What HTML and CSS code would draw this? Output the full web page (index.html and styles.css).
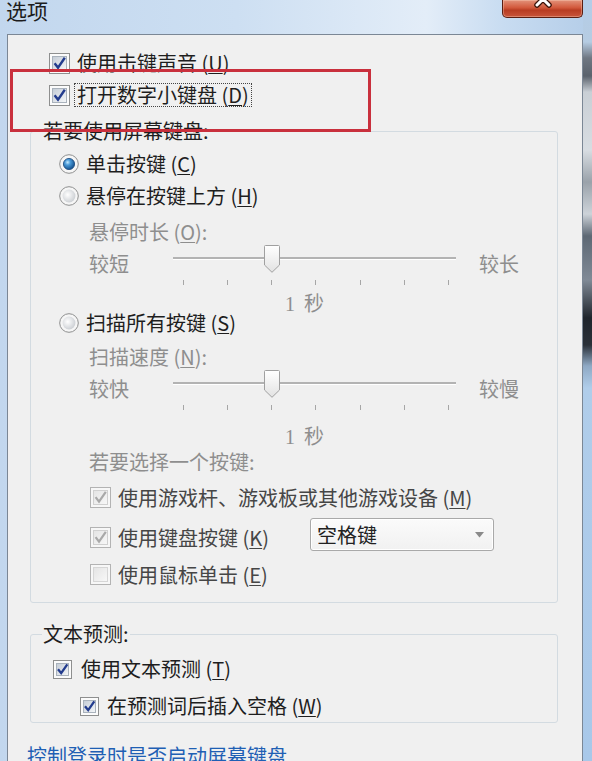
FILE: index.html
```html
<!DOCTYPE html>
<html lang="zh-CN">
<head>
<meta charset="utf-8">
<title>选项</title>
<link rel="stylesheet" href="styles.css">
</head>
<body>
<svg class="defs" width="0" height="0" aria-hidden="true">
  <defs>
    <linearGradient id="cbFill" x1="0" y1="0" x2="1" y2="1">
      <stop offset="0" stop-color="#c4ccd6"/>
      <stop offset="1" stop-color="#f5f7f9"/>
    </linearGradient>
    <linearGradient id="cbFillDis" x1="0" y1="0" x2="1" y2="1">
      <stop offset="0" stop-color="#e4e4e4"/>
      <stop offset="1" stop-color="#f8f8f8"/>
    </linearGradient>
    <radialGradient id="radioIn" cx="0.4" cy="0.4" r="0.7">
      <stop offset="0" stop-color="#ffffff"/>
      <stop offset="1" stop-color="#c6cacf"/>
    </radialGradient>
    <radialGradient id="radioDot" cx="0.38" cy="0.35" r="0.7">
      <stop offset="0" stop-color="#c4e8fc"/>
      <stop offset="0.35" stop-color="#4a9ad8"/>
      <stop offset="1" stop-color="#0f4a86"/>
    </radialGradient>
    <linearGradient id="thumbFill" x1="0" y1="0" x2="0" y2="1">
      <stop offset="0" stop-color="#ffffff"/>
      <stop offset="1" stop-color="#e2e2e2"/>
    </linearGradient>
  </defs>
</svg>

<div class="window">
  <div class="titlebar">
    <div class="title">选项</div>
    <div class="close">
      <svg width="20" height="20" viewBox="0 0 20 20"><path d="M4 4 L16 16 M16 4 L4 16" stroke="#3b1309" stroke-width="5.5" stroke-linecap="round"/><path d="M4 4 L16 16 M16 4 L4 16" stroke="#ffffff" stroke-width="3" stroke-linecap="round"/></svg>
    </div>
  </div>

  <div class="frame-body">
    <div class="client">
      <div class="opt-row">
        <svg class="cb" width="21" height="21" viewBox="0 0 21 21"><rect x=".5" y=".5" width="20" height="20" fill="#fbfbfb" stroke="#8e8f8f"/><rect x="3.5" y="3.5" width="14" height="14" fill="url(#cbFill)" stroke="#a9b2bc"/><path d="M5.6 10.2 L9 14.6 L15.8 4.8" fill="none" stroke="#233c8e" stroke-width="2.4"/></svg>
        <span class="opt-label">使用击键声音 (<u>U</u>)</span>
      </div>
      <div class="opt-row">
        <svg class="cb" width="21" height="21" viewBox="0 0 21 21"><rect x=".5" y=".5" width="20" height="20" fill="#fbfbfb" stroke="#8e8f8f"/><rect x="3.5" y="3.5" width="14" height="14" fill="url(#cbFill)" stroke="#a9b2bc"/><path d="M5.6 10.2 L9 14.6 L15.8 4.8" fill="none" stroke="#233c8e" stroke-width="2.4"/></svg>
        <span class="opt-label focus">打开数字小键盘 (<u>D</u>)</span>
      </div>

      <fieldset class="group group-osk">
        <legend class="group-title">若要使用屏幕键盘:</legend>

        <div class="radio-row r-first">
          <svg width="20" height="20" viewBox="0 0 20 20"><circle cx="10" cy="10" r="9.3" fill="#f6f6f6" stroke="#8e8f8f"/><circle cx="10" cy="10" r="5.6" fill="url(#radioDot)" stroke="#18487c" stroke-width=".8"/></svg>
          <span>单击按键 (<u>C</u>)</span>
        </div>
        <div class="radio-row r-second">
          <svg width="20" height="20" viewBox="0 0 20 20"><circle cx="10" cy="10" r="9.3" fill="#f6f6f6" stroke="#8e8f8f"/><circle cx="10" cy="10" r="6.4" fill="url(#radioIn)"/></svg>
          <span>悬停在按键上方 (<u>H</u>)</span>
        </div>

        <div class="sub-label sl-hover">悬停时长 (<u>O</u>):</div>
        <div class="slider-row sr-hover">
          <span class="slider-end">较短</span>
          <div class="slider">
            <div class="track-area">
              <div class="track"></div>
              <svg class="thumb" width="16" height="28" viewBox="0 0 16 28"><path d="M1.5 .5 H14.5 Q15.5 .5 15.5 1.5 V20 L8 27.3 L.5 20 V1.5 Q.5 .5 1.5 .5 Z" fill="url(#thumbFill)" stroke="#a0a0a0"/></svg>
            </div>
            <div class="ticks"><i></i><i></i><i></i><i></i><i></i><i></i><i></i></div>
          </div>
          <span class="slider-end">较长</span>
        </div>
        <div class="slider-value sv-hover"><span class="num">1</span>秒</div>

        <div class="radio-row r-third">
          <svg width="20" height="20" viewBox="0 0 20 20"><circle cx="10" cy="10" r="9.3" fill="#f6f6f6" stroke="#8e8f8f"/><circle cx="10" cy="10" r="6.4" fill="url(#radioIn)"/></svg>
          <span>扫描所有按键 (<u>S</u>)</span>
        </div>

        <div class="sub-label sl-scan">扫描速度 (<u>N</u>):</div>
        <div class="slider-row sr-scan">
          <span class="slider-end">较快</span>
          <div class="slider">
            <div class="track-area">
              <div class="track"></div>
              <svg class="thumb" width="16" height="28" viewBox="0 0 16 28"><path d="M1.5 .5 H14.5 Q15.5 .5 15.5 1.5 V20 L8 27.3 L.5 20 V1.5 Q.5 .5 1.5 .5 Z" fill="url(#thumbFill)" stroke="#a0a0a0"/></svg>
            </div>
            <div class="ticks"><i></i><i></i><i></i><i></i><i></i><i></i><i></i></div>
          </div>
          <span class="slider-end">较慢</span>
        </div>
        <div class="slider-value sv-scan"><span class="num">1</span>秒</div>

        <div class="sub-label sl-select">若要选择一个按键:</div>

        <div class="cb-row cbr-joy">
          <svg class="cb" width="21" height="21" viewBox="0 0 21 21"><rect x=".5" y=".5" width="20" height="20" fill="#f7f7f7" stroke="#b3b3b3"/><rect x="3.5" y="3.5" width="14" height="14" fill="url(#cbFillDis)" stroke="#d0d0d0"/><path d="M5.6 10.2 L9 14.6 L15.8 4.8" fill="none" stroke="#a9a9a9" stroke-width="2.2"/></svg>
          <span>使用游戏杆、游戏板或其他游戏设备 (<u>M</u>)</span>
        </div>
        <div class="cb-row cbr-key">
          <div class="keysel">
            <svg class="cb" width="21" height="21" viewBox="0 0 21 21"><rect x=".5" y=".5" width="20" height="20" fill="#f7f7f7" stroke="#b3b3b3"/><rect x="3.5" y="3.5" width="14" height="14" fill="url(#cbFillDis)" stroke="#d0d0d0"/><path d="M5.6 10.2 L9 14.6 L15.8 4.8" fill="none" stroke="#a9a9a9" stroke-width="2.2"/></svg>
            <span>使用键盘按键 (<u>K</u>)</span>
          </div>
          <div class="dropdown">
            <span class="dropdown-value">空格键</span>
            <svg class="dropdown-arrow" width="9" height="6" viewBox="0 0 9 6"><path d="M0 0 H9 L4.5 5.5 Z" fill="#8a8a8a"/></svg>
          </div>
        </div>
        <div class="cb-row cbr-mouse">
          <svg class="cb" width="21" height="21" viewBox="0 0 21 21"><rect x=".5" y=".5" width="20" height="20" fill="#f7f7f7" stroke="#b3b3b3"/><rect x="3.5" y="3.5" width="14" height="14" fill="url(#cbFillDis)" stroke="#d6d6d6"/></svg>
          <span>使用鼠标单击 (<u>E</u>)</span>
        </div>
      </fieldset>

      <fieldset class="group group-tp">
        <legend class="group-title">文本预测:</legend>
        <div class="tp-row tp-row-1">
          <svg class="cb" width="19" height="19" viewBox="0 0 19 19"><rect x=".5" y=".5" width="18" height="18" fill="#fbfbfb" stroke="#8e8f8f"/><rect x="3.5" y="3.5" width="12" height="12" fill="url(#cbFill)" stroke="#a9b2bc"/><path d="M5 9.2 L8.2 13.2 L14.3 4.4" fill="none" stroke="#233c8e" stroke-width="2.3"/></svg>
          <span>使用文本预测 (<u>T</u>)</span>
        </div>
        <div class="tp-row tp-row-2">
          <svg class="cb" width="19" height="19" viewBox="0 0 19 19"><rect x=".5" y=".5" width="18" height="18" fill="#fbfbfb" stroke="#8e8f8f"/><rect x="3.5" y="3.5" width="12" height="12" fill="url(#cbFill)" stroke="#a9b2bc"/><path d="M5 9.2 L8.2 13.2 L14.3 4.4" fill="none" stroke="#233c8e" stroke-width="2.3"/></svg>
          <span>在预测词后插入空格 (<u>W</u>)</span>
        </div>
      </fieldset>

      <a class="osk-link" href="#">控制登录时是否启动屏幕键盘</a>

      <div class="callout"></div>
    </div>
  </div>
</div>
</body>
</html>
```

FILE: styles.css
```css
* {
  box-sizing: border-box;
}

html,
body {
  margin: 0;
  padding: 0;
}

body {
  width: 592px;
  height: 761px;
  overflow: hidden;
  font-family: "Noto Sans CJK SC", "Noto Sans", sans-serif;
  font-size: 20px;
  line-height: 20px;
  color: #1e1e1e;
}

u {
  text-decoration-thickness: 1px;
  text-underline-offset: 2px;
}

.defs {
  display: block;
  width: 0;
  height: 0;
  overflow: hidden;
}

.window {
  width: 592px;
  height: 761px;
  display: flex;
  flex-direction: column;
  background:
    linear-gradient(to bottom,
      #b4cde8 0px, #b6cce2 42px, #6f7782 58px, #5a626c 76px, #c9cfd5 92px,
      #d8dde2 150px, #9aa2aa 182px, #cdd3d9 214px, #5d6874 236px, #808a96 280px,
      #1f252c 318px, #2b3139 345px, #8fa9c4 366px, #b0cdea 388px, #a8c8e9 761px) right top / 9px 100% no-repeat,
    linear-gradient(to right, #c2d7ee 0%, #cddff2 40%, #e3edf8 72%, #c8dcf1 85%, #b4cde8 100%);
}

.titlebar {
  flex: none;
  height: 34px;
  display: flex;
  align-items: flex-start;
}

.title {
  margin: 0 0 0 6px;
  font-size: 21px;
  line-height: 21px;
  color: #1c1c1c;
}

.close {
  margin-left: auto;
  margin-right: 9px;
  width: 81px;
  height: 18px;
  border: 1px solid #5a1e12;
  border-top: none;
  border-radius: 0 0 5px 5px;
  background: linear-gradient(to bottom, #e3927a 0%, #d2593c 45%, #b83c22 60%, #c8553a 100%);
  box-shadow: inset 0 0 0 1px rgba(255, 220, 200, 0.35);
  display: flex;
  justify-content: center;
  overflow: hidden;
}

.close svg {
  margin-top: -11px;
}

.frame-body {
  flex: 1;
  min-height: 0;
  display: flex;
  padding: 0 9px 0 7px;
}

.client {
  flex: 1;
  position: relative;
  overflow: hidden;
  background: #f0f0f0;
  border: 1px solid #7b8795;
  border-bottom: none;
  padding-top: 12px;
}

/* top checkboxes */
.opt-row {
  display: flex;
  align-items: center;
  height: 32px;
  margin-left: 41px;
}

.cb {
  flex: none;
  display: block;
}

.opt-label {
  margin-left: 4px;
  padding: 1px 2px;
  border: 1px dotted transparent;
}

.opt-label.focus {
  border-color: #444;
}

/* group boxes */
.group {
  min-width: 0;
  margin: 8px 24px 0 22px;
  padding: 0 0 17px 0;
  border: 1px solid #d3dbe1;
  border-radius: 3px;
}

.group-title {
  margin-left: 11px;
  padding: 0 1px;
  line-height: 24px;
}

.group-tp {
  margin-top: 19px;
  padding-bottom: 6px;
}

.radio-row {
  display: flex;
  align-items: center;
  gap: 7px;
  height: 20px;
  margin-left: 28px;
}

.radio-row svg {
  flex: none;
  display: block;
}

.r-first { margin-top: 11px; }
.r-second { margin-top: 12px; }
.r-third { margin-top: 0; }

.sub-label {
  height: 20px;
  margin-left: 58px;
  color: #8e8e8e;
}

.sl-hover { margin-top: 16px; }
.sl-scan { margin-top: 14px; }
.sl-select { margin-top: 6px; }

.slider-row {
  display: flex;
  align-items: flex-start;
  height: 38px;
  margin: 6px 0 0 58px;
  color: #8e8e8e;
}

.slider-end {
  flex: none;
  width: 40px;
  margin-top: 6px;
}

.slider {
  flex: none;
  width: 283px;
  margin: 0 23px 0 44px;
}

.track-area {
  position: relative;
  height: 32px;
  padding-top: 9px;
}

.track {
  height: 3px;
  border-top: 2px solid #b3b3b3;
  border-bottom: 1px solid #ffffff;
}

.thumb {
  position: absolute;
  left: 91px;
  top: -3px;
  display: block;
}

.ticks {
  display: flex;
  justify-content: space-between;
  height: 6px;
  padding: 0 7px 0 10px;
}

.ticks i {
  display: block;
  width: 1px;
  height: 5px;
  background: #a6a6a6;
}

.slider-value {
  height: 20px;
  margin-left: 254px;
  color: #8e8e8e;
}

.slider-value .num {
  font-family: "Liberation Serif", serif;
  margin-right: 9px;
}

.sv-hover { margin-top: 7px; }
.sv-scan { margin-top: 15px; }

.cb-row {
  display: flex;
  align-items: center;
  gap: 7px;
  height: 21px;
  margin-left: 59px;
  color: #464646;
}

.cbr-joy { margin-top: 15px; }

.cbr-key {
  align-items: flex-start;
  gap: 0;
  height: 33px;
  margin-top: 10px;
}

.cbr-mouse { margin-top: 13px; }

.keysel {
  flex: none;
  display: flex;
  align-items: center;
  gap: 7px;
  width: 220px;
  height: 21px;
  margin-top: 9px;
}

.dropdown {
  flex: none;
  display: flex;
  align-items: center;
  width: 184px;
  height: 33px;
  padding: 0 9px 0 6px;
  border: 1px solid #a9a9a9;
  border-radius: 3px;
  background: linear-gradient(to bottom, #fbfbfb, #f1f1f1);
  box-shadow: inset 0 0 0 1px #ffffff;
  color: #222;
}

.dropdown-value {
  flex: 1;
}

.dropdown-arrow {
  display: block;
}

/* text prediction group */
.tp-row {
  display: flex;
  align-items: center;
  gap: 9px;
  height: 20px;
}

.tp-row-1 {
  margin: 13px 0 0 22px;
}

.tp-row-2 {
  margin: 17px 0 0 49px;
  gap: 8px;
}

.osk-link {
  display: block;
  margin: 23px 0 0 19px;
  color: #1f5fb4;
  text-decoration: none;
  line-height: 20px;
  white-space: nowrap;
}

/* annotation frame drawn over the dialog */
.callout {
  position: absolute;
  left: 2px;
  top: 34px;
  width: 361px;
  height: 63px;
  border: 3px solid #c9303d;
  pointer-events: none;
}
```
